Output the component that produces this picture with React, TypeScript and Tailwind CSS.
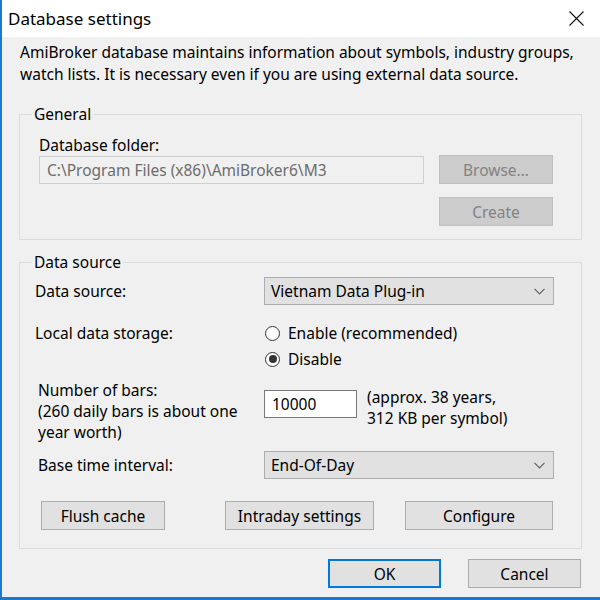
import React from 'react'

/* ---------- pieces ---------- */
function Btn({
  children,
  w,
  disabled = false,
  focus = false,
}: {
  children: React.ReactNode
  w: string
  disabled?: boolean
  focus?: boolean
}) {
  const look = disabled
    ? 'bg-[#cccccc] border border-[#bfbfbf] text-[#838383]'
    : focus
    ? 'bg-[#e1e1e1] border-2 border-[#0078d7] text-black'
    : 'bg-[#e1e1e1] border border-[#adadad] text-black'
  return (
    <div className={`${w} h-[29px] flex items-center justify-center ${look}`}>{children}</div>
  )
}

function Combo({ value }: { value: string }) {
  return (
    <div className="w-[290px] h-[28px] bg-[#e1e1e1] border border-[#adadad] flex items-center justify-between pl-[6px] pr-[8px]">
      <span>{value}</span>
      <svg width="11" height="7" viewBox="0 0 11 7" fill="none">
        <polyline points="0.5,0.8 5.5,5.8 10.5,0.8" stroke="#606060" strokeWidth="1.2" />
      </svg>
    </div>
  )
}

function Radio({ label, checked = false }: { label: string; checked?: boolean }) {
  return (
    <div className="h-[26px] flex items-center gap-[8px]">
      <span className="w-[15px] h-[15px] rounded-full border border-[#333333] bg-white flex items-center justify-center">
        {checked && <span className="w-[8px] h-[8px] rounded-full bg-[#333333]" />}
      </span>
      <span>{label}</span>
    </div>
  )
}

function GroupBox({ title, className = '', children }: { title: string; className?: string; children: React.ReactNode }) {
  return (
    <fieldset className={`border border-[#dcdcdc] ${className}`}>
      <legend className="ml-[12px] px-[2px] leading-[20px]">{title}</legend>
      {children}
    </fieldset>
  )
}

/* ---------- dialog ---------- */
export default function App() {
  return (
    <div className="w-[600px] h-[600px] overflow-hidden flex flex-col bg-[#f0f0f0] border-l-2 border-b-[3px] border-[#1a7ad0] font-['Noto_Sans',sans-serif] text-[15.5px] leading-[22px] text-black">
      {/* title bar */}
      <div className="h-[37px] shrink-0 bg-white flex items-center justify-between pl-[6px] pr-[16px]">
        <span className="text-[17px]">Database settings</span>
        <svg width="15" height="15" viewBox="0 0 15 15">
          <path d="M0.5 0.5 L14.5 14.5 M14.5 0.5 L0.5 14.5" stroke="#111111" strokeWidth="1.1" />
        </svg>
      </div>

      <div className="flex-1 pl-[17px] pr-[18px]">
        <p className="pt-[4px] pl-[1px] leading-[22px]">
          AmiBroker database maintains information about symbols, industry groups,
          <br />
          watch lists. It is necessary even if you are using external data source.
        </p>

        {/* General */}
        <GroupBox title="General" className="mt-[19px]">
          <div className="pl-[19px] pr-[28px] pb-[13px]">
            <div className="mt-[11px] leading-[20px]">Database folder:</div>
            <div className="flex items-center justify-between">
              <div className="w-[385px] h-[28px] border border-[#cfcfcf] bg-[#f0f0f0] flex items-center pl-[7px] text-[#6d6d6d]">
                C:\Program Files (x86)\AmiBroker6\M3
              </div>
              <Btn w="w-[114px]" disabled>
                Browse...
              </Btn>
            </div>
            <div className="mt-[13px] flex justify-end">
              <Btn w="w-[114px]" disabled>
                Create
              </Btn>
            </div>
          </div>
        </GroupBox>

        {/* Data source */}
        <GroupBox title="Data source" className="mt-[12px]">
          <div className="pl-[15px] pb-[18px]">
            <div className="mt-[5px] flex items-center">
              <span className="w-[229px]">Data source:</span>
              <Combo value="Vietnam Data Plug-in" />
            </div>

            <div className="mt-[15px] flex items-start">
              <span className="w-[229px] leading-[26px]">Local data storage:</span>
              <div className="flex flex-col pl-[1px]">
                <Radio label="Enable (recommended)" />
                <Radio label="Disable" checked />
              </div>
            </div>

            <div className="mt-[8px] flex items-start">
              <span className="w-[229px] pl-[3px] leading-[21px]">
                Number of bars:
                <br />
                (260 daily bars is about one
                <br />
                year worth)
              </span>
              <div className="mt-[10px] w-[93px] h-[28px] border border-[#7a7a7a] bg-white flex items-center pl-[7px]">
                10000
              </div>
              <span className="mt-[7px] ml-[10px] leading-[21px]">
                (approx. 38 years,
                <br />
                312 KB per symbol)
              </span>
            </div>

            <div className="mt-[8px] flex items-center">
              <span className="w-[229px] pl-[3px]">Base time interval:</span>
              <Combo value="End-Of-Day" />
            </div>

            <div className="mt-[22px] flex pl-[6px]">
              <Btn w="w-[124px]">Flush cache</Btn>
              <div className="ml-[60px]">
                <Btn w="w-[149px]">Intraday settings</Btn>
              </div>
              <div className="ml-[31px]">
                <Btn w="w-[148px]">Configure</Btn>
              </div>
            </div>
          </div>
        </GroupBox>

        <div className="mt-[10px] flex justify-end gap-[27px] pr-[1px]">
          <Btn w="w-[113px]" focus>
            OK
          </Btn>
          <Btn w="w-[113px]">Cancel</Btn>
        </div>
      </div>
    </div>
  )
}
